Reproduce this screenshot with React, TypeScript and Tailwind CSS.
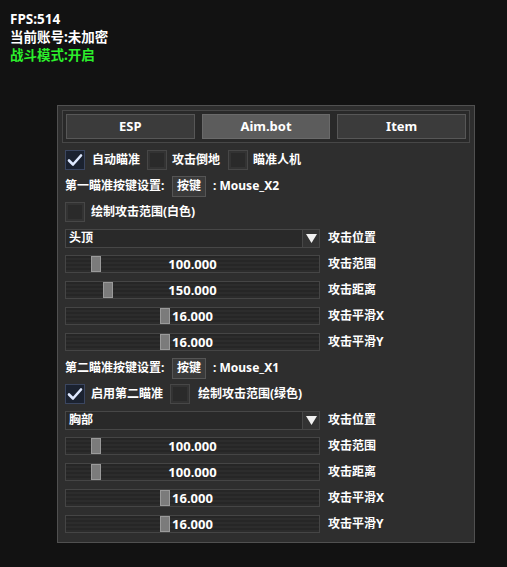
import React from "react";

type SliderRow = { value: string; pos: number; label: string };

const font = { fontFamily: '"Noto Sans", "Noto Sans CJK SC", sans-serif' };

function Check({ on }: { on?: boolean }): React.JSX.Element {
  return (
    <div
      className={
        on
          ? "flex h-[20px] w-[20px] shrink-0 items-center justify-center border border-[#3b4660] bg-[#1b2230]"
          : "h-[20px] w-[20px] shrink-0 border border-[#474747] bg-[#2a2a2a] shadow-[inset_0_0_0_2px_#333]"
      }
    >
      {on ? (
        <svg width="16" height="14" viewBox="0 0 16 14">
          <polyline
            points="2,7.5 6,11.5 14,2.5"
            fill="none"
            stroke="#dfe9ff"
            strokeWidth="2.6"
            strokeLinecap="round"
            strokeLinejoin="round"
          />
        </svg>
      ) : null}
    </div>
  );
}

function Row({ children }: { children: React.ReactNode }): React.JSX.Element {
  return <div className="flex h-[26px] items-center">{children}</div>;
}

function KeyRow({ label, key2 }: { label: string; key2: string }): React.JSX.Element {
  return (
    <Row>
      <span className="w-[107px]">{label}</span>
      <div className="flex h-[21px] w-[34px] items-center justify-center border border-[#555] bg-[#3a3a3a]">
        按键
      </div>
      <span className="ml-[7px]">: {key2}</span>
    </Row>
  );
}

function Combo({ text }: { text: string }): React.JSX.Element {
  return (
    <Row>
      <div className="flex h-[19px] w-[255px] items-center justify-between border border-[#474747] bg-[#292929] pl-[3px]">
        <span>{text}</span>
        <div className="flex h-[17px] w-[17px] items-center justify-center border-l border-[#474747] bg-[#333]">
          <svg width="11" height="9" viewBox="0 0 11 9">
            <polygon points="0,0 11,0 5.5,9" fill="#f2f2f2" />
          </svg>
        </div>
      </div>
      <span className="ml-[8px]">攻击位置</span>
    </Row>
  );
}

function Slider({ value, pos, label }: SliderRow): React.JSX.Element {
  return (
    <Row>
      <div className="relative flex h-[18px] w-[255px] items-center justify-center border border-[#454545] bg-[repeating-linear-gradient(180deg,#262626_0px,#262626_2px,#2c2c2c_2px,#2c2c2c_4px)]">
        <div
          className="absolute top-[0px] h-[16px] w-[10px] border border-[#9a9a9a] bg-[#7b7b7b]"
          style={{ left: pos }}
        />
        <span className="relative text-[13px]">{value}</span>
      </div>
      <span className="ml-[8px]">{label}</span>
    </Row>
  );
}

const first: SliderRow[] = [
  { value: "100.000", pos: 25, label: "攻击范围" },
  { value: "150.000", pos: 37, label: "攻击距离" },
  { value: "16.000", pos: 94, label: "攻击平滑X" },
  { value: "16.000", pos: 94, label: "攻击平滑Y" },
];

const second: SliderRow[] = [
  { value: "100.000", pos: 25, label: "攻击范围" },
  { value: "100.000", pos: 25, label: "攻击距离" },
  { value: "16.000", pos: 94, label: "攻击平滑X" },
  { value: "16.000", pos: 94, label: "攻击平滑Y" },
];

export default function App(): React.JSX.Element {
  const tabs = ["ESP", "Aim.bot", "Item"];

  return (
    <div
      className="h-[567px] w-full overflow-hidden bg-[#121212] text-[12px] font-bold text-white"
      style={font}
    >
      <div className="pl-[10px] pt-[10px] text-[13.5px] leading-[18px]">
        <div>FPS:514</div>
        <div>当前账号:未加密</div>
        <div className="text-[#2cf02c]">战斗模式:开启</div>
      </div>

      <div className="ml-[57px] mt-[41px] h-[438px] w-[418px] border border-[#505050] bg-[#2e2e2e] p-[4px] leading-none">
        <div className="flex gap-[7px] border border-[#474747] bg-[#292929] p-[3px]">
          {tabs.map((t) => (
            <div
              key={t}
              className={
                t === "Aim.bot"
                  ? "flex h-[25px] w-[129px] items-center justify-center border border-[#6a6a6a] bg-[#5c5c5c] text-[13px]"
                  : "flex h-[25px] w-[129px] items-center justify-center border border-[#575757] bg-[#3b3b3b] text-[13px]"
              }
            >
              {t}
            </div>
          ))}
        </div>

        <div className="pl-[3px] pt-[4px]">
          <Row>
            <Check on />
            <span className="ml-[7px]">自动瞄准</span>
            <div className="ml-[7px]">
              <Check />
            </div>
            <span className="ml-[5px]">攻击倒地</span>
            <div className="ml-[8px]">
              <Check />
            </div>
            <span className="ml-[5px]">瞄准人机</span>
          </Row>
          <KeyRow label="第一瞄准按键设置:" key2="Mouse_X2" />
          <Row>
            <Check />
            <span className="ml-[6px]">绘制攻击范围(白色)</span>
          </Row>
          <Combo text="头顶" />
          {first.map((s) => (
            <Slider key={s.label} {...s} />
          ))}
          <KeyRow label="第二瞄准按键设置:" key2="Mouse_X1" />
          <Row>
            <Check on />
            <span className="ml-[6px]">启用第二瞄准</span>
            <div className="ml-[7px]">
              <Check />
            </div>
            <span className="ml-[8px]">绘制攻击范围(绿色)</span>
          </Row>
          <Combo text="胸部" />
          {second.map((s) => (
            <Slider key={s.label} {...s} />
          ))}
        </div>
      </div>
    </div>
  );
}
